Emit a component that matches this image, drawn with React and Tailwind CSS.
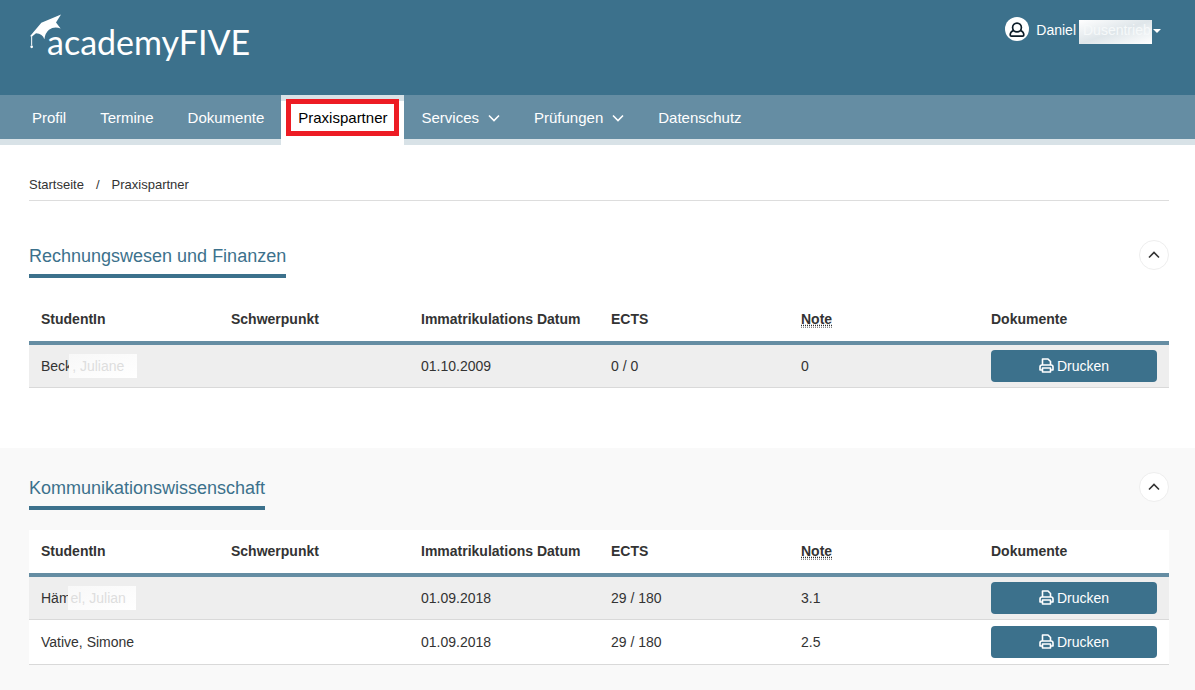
import React from 'react';

const navItems = [
  { label: 'Profil' },
  { label: 'Termine' },
  { label: 'Dokumente' },
  { label: 'Praxispartner', active: true },
  { label: 'Services', menu: true },
  { label: 'Prüfungen', menu: true },
  { label: 'Datenschutz' },
];

const sections = [
  {
    title: 'Rechnungswesen und Finanzen',
    rows: [
      { shown: 'Beck', hidden: ', Juliane', date: '01.10.2009', ects: '0 / 0', grade: '0' },
    ],
  },
  {
    title: 'Kommunikationswissenschaft',
    rows: [
      { shown: 'Häm', hidden: 'el, Julian', date: '01.09.2018', ects: '29 / 180', grade: '3.1' },
      { shown: 'Vative, Simone', date: '01.09.2018', ects: '29 / 180', grade: '2.5' },
    ],
  },
];

function Chevron({ up = false, className }) {
  return (
    <svg viewBox="0 0 12 8" className={className} fill="none" stroke="currentColor" strokeWidth="1.6" aria-hidden="true">
      <path d={up ? 'M1 6.5 L6 1.5 L11 6.5' : 'M1 1.5 L6 6.5 L11 1.5'} />
    </svg>
  );
}

function PrintIcon() {
  return (
    <svg viewBox="0 0 15 16" className="h-4 w-[15px]" fill="none" stroke="currentColor" strokeWidth="1.6" strokeLinejoin="round" aria-hidden="true">
      <path d="M3.5 7 V1 H9 L11.5 3.5 V7" />
      <path d="M3.5 12 H1 V9 Q1 7 3 7 H12 Q14 7 14 9 V12 H11.5" />
      <path d="M3.5 10 H11.5 V14 H3.5 Z" />
    </svg>
  );
}

function Logo() {
  return (
    <a href="#start" className="relative block pl-[17px] text-white">
      <svg viewBox="0 0 96 104" className="absolute left-0 top-0 h-[35px] w-8" fill="#fff" aria-hidden="true">
        <path d="M0 66 L34 26 L93 1 L78 25 L92 43 Q72 36 57 47 Q46 56 43 75 Q38 58 18 57 L7 66 Z" />
        <path d="M5 64 V94" stroke="#fff" strokeWidth="3" />
        <circle cx="5" cy="98" r="4" />
      </svg>
      <span className="block font-['Lato','Liberation_Sans',sans-serif] text-[34px] leading-[56px] font-normal">
        academyFIVE
      </span>
    </a>
  );
}

function UserMenu() {
  return (
    <button type="button" className="flex items-start text-[14px] text-white">
      <svg viewBox="0 0 24 24" className="mr-[7px] size-6" aria-hidden="true">
        <circle cx="12" cy="12" r="12" fill="#fff" />
        <g fill="none" stroke="#0c1c28" strokeWidth="1.7" strokeLinejoin="round">
          <circle cx="12" cy="10.5" r="4.4" />
          <path d="M8.6 13.6 Q5.2 14.6 5.2 18 Q5.2 19.2 6.4 19.2 H17.6 Q18.8 19.2 18.8 18 Q18.8 14.6 15.4 13.6" />
        </g>
      </svg>
      <span className="leading-[26px]">Daniel</span>
      <span className="mt-[3px] ml-[3px] h-6 w-[73px] bg-linear-to-br from-white via-[#dfe6ea] to-white pl-1 text-left leading-5 whitespace-nowrap text-[#f6f9fa]">
        Dusentrieb
      </span>
      <svg viewBox="0 0 8 4" className="mt-3 ml-px h-1 w-2" fill="#fff" aria-hidden="true">
        <path d="M0 0 H8 L4 4 Z" />
      </svg>
    </button>
  );
}

function Nav() {
  return (
    <nav className="bg-[#658da3]">
      <ul className="flex border-b-[6px] border-[#d8e2e7] pl-[15px] text-[15px] leading-[22px]">
        {navItems.map((item) => (
          <li key={item.label}>
            {item.active ? (
              <a
                href="#praxispartner"
                aria-current="page"
                className="relative -mb-[6px] block h-[50px] border-t-[6px] border-[#d8e2e7] bg-white px-[17px] pt-[6px] text-black"
              >
                {item.label}
                <span className="absolute inset-x-[5px] -top-[2px] h-[37px] border-[5px] border-[#ed1c24]" />
              </a>
            ) : (
              <a href={'#' + item.label.toLowerCase()} className="flex h-11 items-center gap-[9px] px-[17px] pb-px pt-[2px] text-white">
                {item.label}
                {item.menu && <Chevron className="h-2 w-3" />}
              </a>
            )}
          </li>
        ))}
      </ul>
    </nav>
  );
}

function Student({ row }) {
  return (
    <span className="flex items-center">
      {row.shown}
      {row.hidden && (
        <span className="-ml-[3px] h-6 w-[68px] bg-linear-to-br from-[#f8f8f8] to-white pl-[3px] leading-6 whitespace-nowrap text-[#dedede]">
          {row.hidden}
        </span>
      )}
    </span>
  );
}

function Section({ section }) {
  return (
    <section className="bg-white pt-6 pr-[26px] pb-[60px] pl-[29px] last:grow last:bg-[#f9f9f9] last:pb-6">
      <div className="flex items-start justify-between">
        <h2 className="border-b-4 border-[#3c718c] pt-1 pb-[6px] text-[18px] leading-6 text-[#3c718c]">
          {section.title}
        </h2>
        <button
          type="button"
          aria-label={section.title + ' einklappen'}
          className="flex size-[30px] items-center justify-center rounded-full border border-[#eeeeee] bg-white text-[#333]"
        >
          <Chevron up className="h-2 w-3" />
        </button>
      </div>
      <table className="mt-5 w-full table-fixed border-collapse bg-white text-left text-[14px] leading-5 text-[#333]">
        <thead>
          <tr className="border-b-4 border-[#658da3]">
            {['StudentIn', 'Schwerpunkt', 'Immatrikulations Datum', 'ECTS', 'Note', 'Dokumente'].map((head) => (
              <th key={head} scope="col" className="h-[45px] px-3 pb-px font-bold whitespace-nowrap">
                {head === 'Note' ? (
                  <abbr title="Durchschnittsnote" className="border-b border-dotted border-[#888] underline decoration-dotted">
                    Note
                  </abbr>
                ) : (
                  head
                )}
              </th>
            ))}
          </tr>
        </thead>
        <tbody>
          {section.rows.map((row) => (
            <tr key={row.shown} className="border-b border-[#d9d9d9] odd:bg-[#eeeeee] first:[&>td]:py-[5px]">
              <td className="px-3">
                <Student row={row} />
              </td>
              <td className="px-3" />
              <td className="px-3">{row.date}</td>
              <td className="px-3">{row.ects}</td>
              <td className="px-3">{row.grade}</td>
              <td className="px-3 py-[6px]">
                <button
                  type="button"
                  className="flex h-8 w-full items-center justify-center gap-[3px] rounded bg-[#3c718c] text-white"
                >
                  <PrintIcon />
                  Drucken
                </button>
              </td>
            </tr>
          ))}
        </tbody>
      </table>
    </section>
  );
}

export default function App() {
  return (
    <div className="flex min-h-screen flex-col bg-white font-['Liberation_Sans',Arial,sans-serif] text-[#333]">
      <header>
        <div className="flex h-[95px] items-start justify-between bg-[#3c718c] pt-[14px] pr-[34px] pl-[30px]">
          <Logo />
          <div className="pt-[3px]">
            <UserMenu />
          </div>
        </div>
        <Nav />
      </header>
      <main className="flex grow flex-col">
        <nav aria-label="Brotkrumen" className="mr-[26px] mb-[15px] ml-[29px] border-b border-[#dddddd] pt-[30px] pb-[6px]">
          <ol className="flex gap-3 text-[13px] leading-[19px]">
            <li>
              <a href="#start">Startseite</a>
            </li>
            <li aria-hidden="true">/</li>
            <li aria-current="page">Praxispartner</li>
          </ol>
        </nav>
        {sections.map((section) => (
          <Section key={section.title} section={section} />
        ))}
      </main>
    </div>
  );
}
